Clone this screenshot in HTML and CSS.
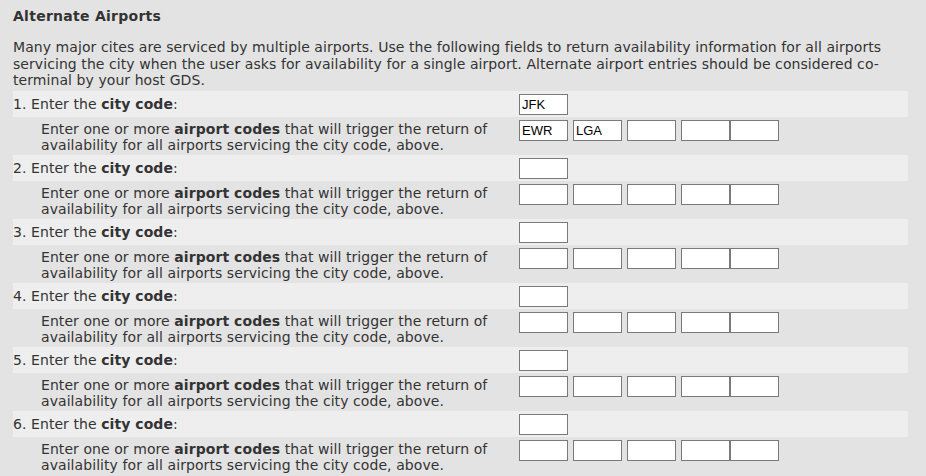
FILE: index.html
```html
<!DOCTYPE html>
<html>
<head>
<meta charset="utf-8">
<link rel="stylesheet" href="styles.css">
</head>
<body>
<div class="page">
  <h2 class="title">Alternate Airports</h2>
  <p class="intro">Many major cites are serviced by multiple airports. Use the following fields to return availability information for all airports servicing the city when the user asks for availability for a single airport. Alternate airport entries should be considered co-terminal by your host GDS.</p>

  <div class="group">
    <div class="row city"><div class="label">1. Enter the <b>city code</b>:</div><div class="fields"><input class="code" value="JFK"></div></div>
    <div class="row airports"><div class="label sub">Enter one or more <b>airport codes</b> that will trigger the return of availability for all airports servicing the city code, above.</div><div class="fields"><input class="code" value="EWR"><input class="code" value="LGA"><input class="code"><input class="code tight"><input class="code"></div></div>
  </div>
  <div class="group">
    <div class="row city"><div class="label">2. Enter the <b>city code</b>:</div><div class="fields"><input class="code"></div></div>
    <div class="row airports"><div class="label sub">Enter one or more <b>airport codes</b> that will trigger the return of availability for all airports servicing the city code, above.</div><div class="fields"><input class="code"><input class="code"><input class="code"><input class="code tight"><input class="code"></div></div>
  </div>
  <div class="group">
    <div class="row city"><div class="label">3. Enter the <b>city code</b>:</div><div class="fields"><input class="code"></div></div>
    <div class="row airports"><div class="label sub">Enter one or more <b>airport codes</b> that will trigger the return of availability for all airports servicing the city code, above.</div><div class="fields"><input class="code"><input class="code"><input class="code"><input class="code tight"><input class="code"></div></div>
  </div>
  <div class="group">
    <div class="row city"><div class="label">4. Enter the <b>city code</b>:</div><div class="fields"><input class="code"></div></div>
    <div class="row airports"><div class="label sub">Enter one or more <b>airport codes</b> that will trigger the return of availability for all airports servicing the city code, above.</div><div class="fields"><input class="code"><input class="code"><input class="code"><input class="code tight"><input class="code"></div></div>
  </div>
  <div class="group">
    <div class="row city"><div class="label">5. Enter the <b>city code</b>:</div><div class="fields"><input class="code"></div></div>
    <div class="row airports"><div class="label sub">Enter one or more <b>airport codes</b> that will trigger the return of availability for all airports servicing the city code, above.</div><div class="fields"><input class="code"><input class="code"><input class="code"><input class="code tight"><input class="code"></div></div>
  </div>
  <div class="group">
    <div class="row city"><div class="label">6. Enter the <b>city code</b>:</div><div class="fields"><input class="code"></div></div>
    <div class="row airports"><div class="label sub">Enter one or more <b>airport codes</b> that will trigger the return of availability for all airports servicing the city code, above.</div><div class="fields"><input class="code"><input class="code"><input class="code"><input class="code tight"><input class="code"></div></div>
  </div>
</div>
</body>
</html>
```
FILE: styles.css
```css
html, body {
  margin: 0;
  padding: 0;
  background: #e3e3e3;
}
body {
  font-family: "DejaVu Sans", Verdana, sans-serif;
  font-size: 14px;
  letter-spacing: 0.07px;
  line-height: 16px;
  color: #333333;
}
.page {
  width: 895px;
  padding: 8px 0 0 13px;
}
.title {
  margin: 0;
  font-size: 14px;
  letter-spacing: 0.27px;
  line-height: 16px;
  font-weight: bold;
  color: #333333;
}
.intro {
  margin: 15px 0 2px 0;
  line-height: 16.5px;
}
.row {
  display: flex;
  align-items: flex-start;
  box-sizing: border-box;
}
.row.city {
  height: 26px;
  background: #eeeeee;
}
.row.airports {
  height: 38px;
}
.label {
  width: 506px;
  flex: none;
  box-sizing: border-box;
}
.row.city .label {
  padding-top: 5px;
}
.label.sub {
  padding: 4px 14px 0 28px;
}
.fields {
  display: flex;
  padding-top: 3px;
}
.code {
  width: 49px;
  height: 21px;
  box-sizing: border-box;
  margin: 0 5px 0 0;
  padding: 0 2px;
  border: 1px solid #7a7a7a;
  background: #ffffff;
  font-family: "Liberation Sans", Arial, sans-serif;
  font-size: 13px;
  letter-spacing: 0;
  color: #000000;
  outline: none;
}
.code.tight {
  margin-right: 0;
}
```
